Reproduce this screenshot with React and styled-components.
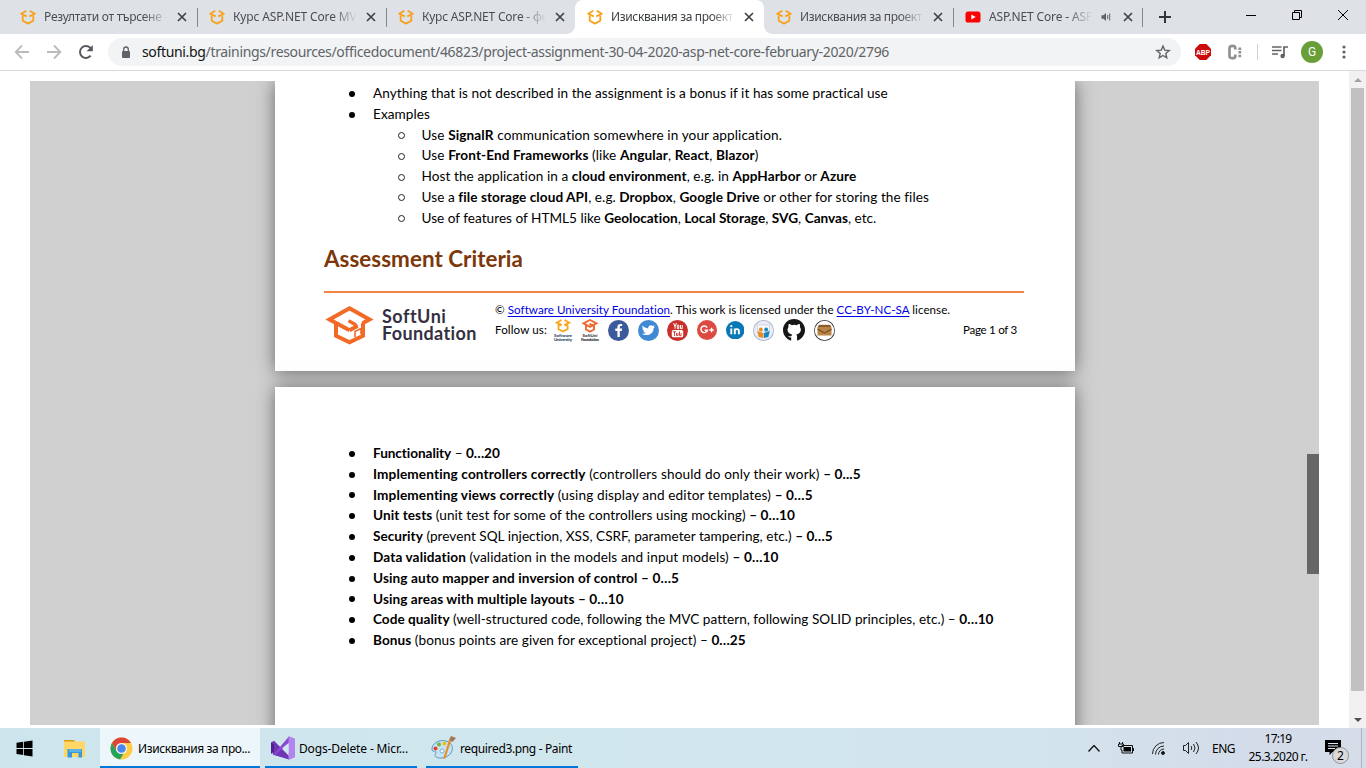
import React, { useLayoutEffect, useRef, useState } from "react";
import styled, { createGlobalStyle } from "styled-components";

const Global = createGlobalStyle`
  * { box-sizing: border-box; }
  html, body { margin: 0; padding: 0; overflow: hidden; }
  body { width: 1366px; height: 768px; font-family: "Noto Sans", "Open Sans", sans-serif; background: #fff; }
  svg { display: block; flex: none; }
`;

const FitText = styled.span`
  display: inline-block;
  white-space: pre;
`;

/* Spreads a run of text over a known width by adjusting its tracking. */
function Fit({ w, children }) {
  const ref = useRef(null);
  const [gap, setGap] = useState(0);
  useLayoutEffect(() => {
    const el = ref.current;
    const run = () => {
      el.style.letterSpacing = "0px";
      const value = (w - el.getBoundingClientRect().width) / el.textContent.length;
      el.style.letterSpacing = value + "px";
      setGap(value);
    };
    run();
    document.fonts.ready.then(run);
  }, [w]);
  return <FitText ref={ref} style={{ letterSpacing: gap }}>{children}</FitText>;
}

const Screen = styled.div`
  width: 1366px; height: 768px; display: flex; flex-direction: column; overflow: hidden;
`;

/* ---------- tab strip ---------- */
const TabStrip = styled.div`
  height: 34px; flex: none; background: #dee1e6; display: flex; padding-left: 8px;
`;
const TabBox = styled.div`
  position: relative; width: 189px; flex: none; height: 34px; display: flex; align-items: center;
  padding-left: 12px; font-size: 12px; color: ${(p) => (p.$active ? "#3c4043" : "#4a4d51")};
  background: ${(p) => (p.$active ? "#fff" : "transparent")};
  border-radius: 8px 8px 0 0;
  &::after {
    content: ""; position: absolute; right: -1px; top: 8px; width: 1px; height: 19px;
    background: ${(p) => (p.$line ? "#85898e" : "transparent")};
  }
`;
const Foot = styled.i`
  position: absolute; bottom: 0; ${(p) => p.$side}: -8px; width: 8px; height: 8px;
  background: radial-gradient(circle at ${(p) => (p.$side === "left" ? "0 0" : "100% 0")}, transparent 7.5px, #fff 8px);
`;
const TabTitle = styled.div`
  width: ${(p) => p.$w || 126}px; flex: none; margin-left: 8px; overflow: hidden; white-space: nowrap; line-height: 18px;
  mask-image: linear-gradient(90deg, #000 calc(100% - 26px), transparent calc(100% - 2px));
`;
const TabIcon = styled.div`
  width: 29px; flex: none; padding-left: 7px;
`;
const NewTab = styled.div`
  width: 45px; display: flex; align-items: center; justify-content: center;
`;
const WindowButtons = styled.div`
  margin-left: auto; display: flex; height: 29px; align-items: center;
`;
const WindowButton = styled.div`
  width: 46px; display: flex; justify-content: center;
`;

/* ---------- toolbar ---------- */
const Toolbar = styled.div`
  height: 37px; flex: none; background: #fff; border-bottom: 1px solid #d7d9dc; display: flex; align-items: center;
  padding-left: 14px;
`;
const NavIcon = styled.div`
  width: 32px; flex: none; display: flex; align-items: center; padding-left: ${(p) => p.$pad || 0}px;
`;
const Omnibox = styled.div`
  margin-left: -2px; width: 1073px; flex: none; height: 28px; border-radius: 14px; background: #f1f3f4; display: flex; align-items: center;
  padding: 0 10px 0 13px; font-size: 14px; color: #5f6368;
`;
const Url = styled.div`
  margin-left: 11px; flex: 1; line-height: 20px;
  b { font-weight: 400; color: #111315; }
`;
const Actions = styled.div`
  flex: 1; display: flex; align-items: center; padding-left: 13px;
`;
const Separator = styled.div`
  width: 1px; flex: none; height: 16px; background: #cfd1d4; margin: 0 14px 0 13px;
`;
const Avatar = styled.div`
  width: 22px; flex: none; height: 22px; border-radius: 50%; background: #689f38; color: #fff; font: 12px/22px Roboto, sans-serif;
  text-align: center; margin: 0 19px 0 13px;
`;

/* ---------- viewport ---------- */
const Viewport = styled.div`
  height: 657px; flex: none; display: flex; background: #fff; padding-left: 30px;
`;
const Viewer = styled.div`
  width: 1289px; height: 644px; margin: 10px 30px 0 0; background: #d0d0d0; display: flex; overflow: hidden;
`;
const Pages = styled.div`
  width: 1277px; padding-left: 245px; display: flex; flex-direction: column; gap: 16px;
`;
const InnerTrack = styled.div`
  width: 12px; padding-top: 373px;
`;
const InnerThumb = styled.div`
  height: 120px; background: #666;
`;
const ScrollBar = styled.div`
  width: 17px; height: 657px; background: #f1f1f1; display: flex; flex-direction: column; align-items: center;
`;
const ScrollEnd = styled.div`
  height: 17px; display: flex; align-items: center;
`;
const ScrollThumb = styled.div`
  width: 13px; height: 603px; background: #c1c1c1; margin-bottom: 20px;
`;

/* ---------- document ---------- */
const Sheet = styled.article`
  width: 800px; height: ${(p) => p.$h}px; flex: none; background: #fff; color: #000;
  box-shadow: 0 1px 17px 0 rgba(0, 0, 0, .5);
  font-family: Lato, sans-serif; font-size: 13.6px; padding: ${(p) => p.$pad};
`;
const Item = styled.div`
  height: 20.8px; line-height: 20.8px; display: flex; align-items: center; white-space: pre;
  padding-left: ${(p) => (p.$sub ? 73.5 : 25)}px;
  b { font-weight: 700; }
`;
const Mark = styled.i`
  width: ${(p) => (p.$sub ? 7 : 6)}px; height: ${(p) => (p.$sub ? 7 : 6)}px; border-radius: 50%; flex: none;
  margin-right: ${(p) => (p.$sub ? 17 : 18)}px;
  margin-top: 1px;
  background: ${(p) => (p.$sub ? "transparent" : "#000")};
  border: ${(p) => (p.$sub ? "1px solid #222" : "none")};
`;
const Heading = styled.h1`
  margin: 15px 0 0; height: 30px; font-size: 22.4px; line-height: 30px; font-weight: 700; color: #7c380a;
`;
const Footer = styled.footer`
  margin-top: 17px; width: 700px; border-top: 2px solid #f58345; display: flex;
`;
const Brand = styled.div`
  width: 170px; display: flex; padding: 13px 0 0 1px;
`;
const BrandName = styled.div`
  margin: 2px 0 0 8px; font: 700 18px/17.5px Lato, sans-serif; color: #343042; display: flex; flex-direction: column;
`;
const Legal = styled.div`
  flex: 1; padding: 7px 0 0 1px; font-size: 11.6px; line-height: 20px; white-space: pre;
  a { color: #0000e8; text-decoration: underline; text-underline-offset: 2px; }
`;
const Social = styled.div`
  display: flex; align-items: center; height: 20px;
`;
const Icons = styled.div`
  display: flex; align-items: center; margin-left: 5px; padding-top: 1px;
`;
const IconCell = styled.div`
  width: ${(p) => p.$w}px; height: 24px; display: flex; justify-content: center; align-items: center;
`;
const PageNo = styled.div`
  margin-left: 124px;
`;

/* ---------- taskbar ---------- */
const TaskBar = styled.div`
  height: 40px; flex: none; display: flex; font-size: 12px; color: #000;
  background: linear-gradient(90deg, #cde5ed 0, #d1e7ee 45%, #d2e4ed 75%, #d4dcea 92%, #d6dde9 100%);
`;
const TaskButton = styled.div`
  width: ${(p) => p.$w}px; height: 40px; display: flex; align-items: center; padding-left: ${(p) => p.$pad}px;
  margin-right: ${(p) => p.$gap || 0}px; gap: ${(p) => p.$space || 4}px;
  background: ${(p) => (p.$active ? "#edf6fa" : "transparent")};
  box-shadow: ${(p) => (p.$open ? "inset 0 -2px #0078d7" : "none")};
`;
const Tray = styled.div`
  margin-left: auto; display: flex; align-items: center;
`;
const TrayIcon = styled.div`
  width: ${(p) => p.$w}px; display: flex; justify-content: center;
`;
const Clock = styled.div`
  width: 74px; margin-right: 1px; text-align: center; line-height: 18px; padding-bottom: 1px;
`;
const Notice = styled.div`
  width: 46px; height: 40px; position: relative; padding: 12px 0 0 9px; margin-right: 4px;
  border-right: 1px solid #a9b4bf;
`;
const Count = styled.div`
  position: absolute; left: 16px; top: 19px; width: 17px; height: 17px; border-radius: 50%; background: #dadada;
  border: 1px solid #8e9398; font-size: 12px; line-height: 15px; text-align: center;
`;

/* ---------- drawings ---------- */
const Hat = ({ s = 16, c = "#f9a11b" }) => (
  <svg width={s} height={s} viewBox="0 0 16 16" fill="none" stroke={c} strokeWidth="1.8" strokeLinejoin="round">
    <path d="M6.300 1.800 1.200 4.700 6.700 7.400M9.700 1.800l5.100 2.900-5.500 2.700" />
    <path d="M2.700 6.500v5.300L8 14.600l5.300-2.800V6.500" />
  </svg>
);
const Close = () => (
  <svg width="10" height="10" viewBox="0 0 10 10" stroke="#3f4347" strokeWidth="1.7"><path d="m1 1 8 8M9 1 1 9" /></svg>
);
const YouTube = () => (
  <svg width="16" height="16" viewBox="0 0 16 16"><rect x=".5" y="2.5" width="15" height="11" rx="2.6" fill="#f00" /><path d="m6.3 5.5 4.4 2.5-4.4 2.5z" fill="#fff" /></svg>
);
const SmallSpeaker = () => (
  <svg width="10" height="10" viewBox="0 0 10 10"><path d="M.5 3.2h2L5 1v8L2.5 6.800h-2z" fill="#5f6368" /><path d="M6.700 3v4M8.700 1.500v7" stroke="#5f6368" fill="none" /></svg>
);
const Arrow = ({ flip }) => (
  <svg width="16" height="16" viewBox="0 0 16 16" fill="none" stroke="#b9bbbd" strokeWidth="1.8">
    {flip ? <path d="M1 8h13M8 1.500 14.300 8 8 14.500" /> : <path d="M15 8H2M8 1.500 1.700 8 8 14.500" />}
  </svg>
);
const Reload = () => (
  <svg width="16" height="16" viewBox="0 0 16 16"><path d="M12.700 11.700A6 6 0 1 1 12.600 4.100" fill="none" stroke="#55595e" strokeWidth="2" /><path d="M14.800 1v6.300H8.600z" fill="#55595e" /></svg>
);
const Lock = () => (
  <svg width="10" height="13" viewBox="0 0 10 13"><rect x="1" y="5" width="8" height="7" rx="1" fill="#5f6368" /><path d="M2.700 5V3.300a2.300 2.300 0 0 1 4.600 0V5" fill="none" stroke="#5f6368" strokeWidth="1.300" /></svg>
);
const Star = () => (
  <svg width="16" height="16" viewBox="0 0 16 16"><path d="m8 2 1.700 4.100 4.500.400-3.400 2.900 1 4.400L8 11.500l-3.800 2.300 1-4.400-3.400-2.900 4.500-.400z" fill="none" stroke="#5f6368" strokeWidth="1.400" /></svg>
);
const Abp = () => (
  <svg width="18" height="18" viewBox="0 0 18 18"><path d="M5.700 1h6.600L17 5.700v6.600L12.300 17H5.700L1 12.300V5.700z" fill="#cc0c0c" /><text x="9" y="11.800" textAnchor="middle" fontFamily="Liberation Sans" fontWeight="700" fontSize="7.600" textLength="14" lengthAdjust="spacingAndGlyphs" fill="#fff">ABP</text></svg>
);
const Colon = () => (
  <svg width="16" height="16" viewBox="0 0 16 16" fill="none" stroke="#8f9193"><path d="M8.300 5.500V4Q8.300 1.800 5.500 1.800T2.500 4v8q0 2.200 3 2.200t2.800-2.200v-1.500" strokeWidth="2.700" /><path d="M12.800 3.500v2.500M12.800 7v2.500M12.800 10.700v2.500" strokeWidth="2.800" /></svg>
);
const Music = () => (
  <svg width="16" height="14" viewBox="0 0 16 14"><path d="M0 2h9.500M0 5.500h9.500M0 9h6M12 11V2h4" fill="none" stroke="#5f6368" strokeWidth="1.700" /><circle cx="10.600" cy="11" r="2.200" fill="#5f6368" /></svg>
);
const Dots = () => (
  <svg width="4" height="14" viewBox="0 0 4 14" fill="#5f6368"><circle cx="2" cy="2" r="1.600" /><circle cx="2" cy="7" r="1.600" /><circle cx="2" cy="12" r="1.600" /></svg>
);
const Logo = () => (
  <svg width="49" height="39" viewBox="0 0 49 39" fill="none" stroke="#f26a26" strokeWidth="4">
    <path d="M11 17v12.800l13.500 6.400L38 29.800V17" />
    <path d="M24.500 24.300 4.500 13.500l20-11.200 20 11.200-7 3.800M24.500 24.300l8-4.300" />
    <path d="m23.500 14.800 5 2.700q3 1.600 3 4" strokeWidth="3.400" />
    <path d="M30 31v-5.500l6-3V28" strokeWidth="1.600" />
  </svg>
);
const MiniMark = ({ c, text, lines, solid }) => (
  <svg width="20" height="24" viewBox="0 0 20 24">
    <g transform="translate(2.500 1)" fill="none" stroke={c} strokeWidth="1.900">
      {solid
        ? <path d="M7.500 1 1 4.300l6.500 3.500L14 4.300zM3.500 6.500v4l4 2.200 4-2.200v-4M7 4.500l3 2" />
        : <path d="M6 1 1.300 3.700 6.300 6.200M9 1l4.700 2.700-5 2.500M3 5.500v4.700l4.500 2.300 4.500-2.300V5.500" />}
    </g>
    <g fontFamily="Lato" fontWeight="900" fontSize="4.400" fill={text} textAnchor="middle"><text x="10" y="18.500">{lines[0]}</text><text x="10" y="22.500" textLength="18">{lines[1]}</text></g>
  </svg>
);
const Disc = ({ c, s = 21, children }) => (
  <svg width={s} height={s} viewBox="0 0 21 21"><circle cx="10.500" cy="10.500" r="10.500" fill={c} />{children}</svg>
);
const Facebook = () => <Disc c="#3b5a9b"><path d="M11.800 17v-6h2l.300-2.400h-2.300V7.200c0-.800.300-1.200 1.200-1.200h1.200V4c-3.200-.500-4.800.500-4.800 3v1.600H7.300V11h2.100v6z" fill="#fff" /></Disc>;
const Twitter = () => <Disc c="#4189d3"><path d="M4.500 5.500c1.500 1.800 3.300 2.700 5.700 2.900-.500-2.700 2.700-4.300 4.600-2.400l1.800-.700-1 1.700 1.400-.300-1.400 1.500c0 5.500-6 8.800-11.400 5.700 1.500 0 2.700-.400 3.600-1.200-1.300 0-2.100-.8-2.400-1.800h1c-1.400-.5-2-1.500-2-2.700l1 .3c-1.200-1-1.400-2-.9-3z" fill="#fff" /></Disc>;
const Tube = () => <Disc c="#c9302a"><path d="m6.500 3 1.500 3.500v2.300M9.500 3 8 6.500M10.300 5.200v3.400h1.500V5.200zM13.500 5v3.600h1.700V5" fill="none" stroke="#fff" /><rect x="4.800" y="10" width="11.400" height="7.200" rx="1.500" fill="#fff" /><path d="M6 11.800h3M7.500 11.800V16M9.500 13v2.500h1.500V13M12.500 11.500v4.200h1.600v-2.500" fill="none" stroke="#c9302a" strokeWidth=".9" /></Disc>;
const Google = () => <Disc c="#dc4a41" s={20}><path d="M10.700 8A3.500 3.500 0 1 0 11 10.800H8M13 10.500h4.600M15.300 8.200v4.600" fill="none" stroke="#fff" strokeWidth="1.500" /></Disc>;
const LinkedIn = () => <Disc c="#0879b5" s={18.500}><path d="M6 8.500V15M10 15V8.500M10 11c.4-2.400 4.600-2.500 4.600.3V15" fill="none" stroke="#fff" strokeWidth="2.200" /><circle cx="6" cy="5.800" r="1.300" fill="#fff" /></Disc>;
const Slides = () => <Disc c="#a3adc4"><circle cx="10.500" cy="10.500" r="9.700" fill="#e9ecf7" /><path d="M4.500 5h12v6h-12z" fill="#fafafa" stroke="#c6cbdc" strokeWidth=".7" /><circle cx="7.800" cy="9.500" r="1.900" fill="#e98a22" /><circle cx="13.200" cy="9.500" r="1.900" fill="#1686bd" /><path d="m4.200 11 6 2v5L5.700 17z" fill="#e98a22" /><path d="m16.800 11-6 2v5l4.500-1z" fill="#1686bd" /></Disc>;
const GitHub = () => <Disc c="#171515" s={22}><path d="M7.800 21v-3.500c-2 .4-2.600-.6-3.200-1.700 1.800 1.200 2.400.8 3.500.4.100-.8.400-1.200.7-1.500-4.800-.6-5.300-5-3.500-7-.3-1-.2-2 .2-3 1.200 0 2.200.7 2.900 1.200a9 9 0 0 1 4.600 0c.8-.6 1.700-1.200 2.900-1.200.4 1 .5 2 .2 3 1.800 2 1.300 6.400-3.500 7 .4.400.8 1 .8 2V21z" fill="#fff" /></Disc>;
const Mail = () => <Disc c="#343434"><circle cx="10.500" cy="10.500" r="9.700" fill="#fff" /><path d="M3.500 7.500 5 4.800h11l1.500 2.700V15.500h-14z" fill="#b98448" /><path d="m3.500 8.500 7 4 7-4v1.500l-7 3.500-7-3.500z" fill="#76481e" /><path d="M5 5h11l1 2H4z" fill="#8a5a2b" /></Disc>;

const Windows = () => (
  <svg width="17" height="17" viewBox="0 0 17 17"><path d="m.5 2.800 6.700-1V8H.500zM8 1.700 16.500.500V8H8zM.500 8.900h6.700V15l-6.700-1zM8 8.900h8.500v7.600L8 15.300z" /></svg>
);
const Folder = () => (
  <svg width="22" height="19" viewBox="0 0 22 19"><path d="M0 1h10l1.500 3H0z" fill="#d99a16" /><path d="M0 4V2.500h21V18H0z" fill="#ffd766" /><path d="M3.500 10h14.500v8.500h-3.500V14H8v4.500H3.500z" fill="#3b98d8" /><path d="M5 10h12v3H5z" fill="#5db2e8" /></svg>
);
const Chrome = () => (
  <svg width="23" height="23" viewBox="0 0 24 24"><circle cx="12" cy="12" r="11.500" fill="#fc4" /><path d="M2 6.300A11.500 11.500 0 0 1 22 6.300H12a5.700 5.700 0 0 0-5 8.500z" fill="#dc4639" /><path d="M2 6.300a11.500 11.500 0 0 0 8.500 17.100l5-8.600a5.700 5.700 0 0 1-8.500 0z" fill="#25a35a" /><circle cx="12" cy="12" r="5.800" fill="#f5f5f5" /><circle cx="12" cy="12" r="4.500" fill="#4a86ec" /></svg>
);
const VisualStudio = () => (
  <svg width="24" height="24" viewBox="0 0 24 24"><path d="m0 6.500 3-1.700L18 20v3.500L2 18.700z" fill="#6f35b5" /><path d="m0 6.500 3 2v7L0 18z" fill="#52218f" /><path d="m2 19 16-18.500V7L4 19z" fill="#8b49d2" /><path d="m17.500 0 6.500 2.800v18.400L17.500 24z" fill="#b184ee" /><path d="m17.500 7-6 5 6 5z" fill="#d1e7ee" /></svg>
);
const Paint = () => (
  <svg width="25" height="24" viewBox="0 0 25 24"><path d="M1 14C0 8 8 3 15 5c6 1.500 8 7 5 12-3 4.800-11 6.300-15 4-2-1.300-.5-3 0-4.500C5.500 15 2 16.500 1 14z" fill="#c7e3f2" stroke="#579bc4" /><circle cx="4.500" cy="12.500" r="2" fill="#e53e2d" /><circle cx="8" cy="8.500" r="2" fill="#74b43b" /><circle cx="13.500" cy="7.500" r="2" fill="#f2b91e" /><circle cx="11" cy="15" r="2" fill="#fff" stroke="#6bb0db" /><path d="m20 5-5.500 17-2 1.500.3-3L18 4z" fill="#e98d24" /><path d="m18 4 2-4 5 2-3.500 4z" fill="#a47850" /></svg>
);

const TABS = [
  { title: "Резултати от търсене -", w: 124 },
  { title: "Курс ASP.NET Core MVC", w: 131 },
  { title: "Курс ASP.NET Core - фе", w: 126 },
  { title: "Изисквания за проект", w: 122, active: true },
  { title: "Изисквания за проект", w: 122 },
];

const EXAMPLES = [
  [361, <>Use <b>SignalR</b> communication somewhere in your application.</>],
  [337, <>Use <b>Front-End Frameworks</b> (like <b>Angular</b>, <b>React</b>, <b>Blazor</b>)</>],
  [435, <>Host the application in a <b>cloud environment</b>, e.g. in <b>AppHarbor</b> or <b>Azure</b></>],
  [507, <>Use a <b>file storage cloud API</b>, e.g. <b>Dropbox</b>, <b>Google Drive</b> or other for storing the files</>],
  [455, <>Use of features of HTML5 like <b>Geolocation</b>, <b>Local Storage</b>, <b>SVG</b>, <b>Canvas</b>, etc.</>],
];

const CRITERIA = [
  [127, <><b>Functionality</b> – <b>0…20</b></>],
  [488, <><b>Implementing controllers correctly</b> (controllers should do only their work) <b>– 0...5</b></>],
  [440, <><b>Implementing views correctly</b> (using display and editor templates) <b>– 0…5</b></>],
  [422, <><b>Unit tests</b> (unit test for some of the controllers using mocking) <b>– 0…10</b></>],
  [460, <><b>Security</b> (prevent SQL injection, XSS, CSRF, parameter tampering, etc.) <b>– 0…5</b></>],
  [406, <><b>Data validation</b> (validation in the models and input models) <b>– 0…10</b></>],
  [306, <b>Using auto mapper and inversion of control – 0…5</b>],
  [251, <b>Using areas with multiple layouts – 0…10</b>],
  [620, <><b>Code quality</b> (well-structured code, following the MVC pattern, following SOLID principles, etc.) – <b>0…10</b></>],
  [373, <><b>Bonus</b> (bonus points are given for exceptional project) – <b>0…25</b></>],
];

const Bullet = ({ w, sub, children }) => (
  <Item $sub={sub}><Mark $sub={sub} /><Fit w={w}>{children}</Fit></Item>
);

export default function App() {
  return (
    <Screen>
      <Global />
      <TabStrip>
        {TABS.map((t, i) => (
          <TabBox key={i} $active={t.active} $line={i !== 2 && !t.active}>
            {t.active && <><Foot $side="left" /><Foot $side="right" /></>}
            <Hat />
            <TabTitle><Fit w={t.w}>{t.title}</Fit></TabTitle>
            <TabIcon><Close /></TabIcon>
          </TabBox>
        ))}
        <TabBox $line>
          <YouTube />
          <TabTitle $w={105}><Fit w={104}>ASP.NET Core - ASP</Fit></TabTitle>
          <TabIcon><SmallSpeaker /></TabIcon>
          <Close />
        </TabBox>
        <NewTab><svg width="12" height="12" viewBox="0 0 12 12" stroke="#34373a" strokeWidth="2"><path d="M0 6h12M6 0v12" /></svg></NewTab>
        <WindowButtons>
          <WindowButton><svg width="10" height="10" stroke="#000"><path d="M0 5.500h10" /></svg></WindowButton>
          <WindowButton><svg width="10" height="10" fill="none" stroke="#000"><path d="M.500 2.500h7v7h-7zM2.500 2V.500h7v7H8" /></svg></WindowButton>
          <WindowButton><svg width="10" height="10" stroke="#000"><path d="m0 0 10 10M10 0 0 10" /></svg></WindowButton>
        </WindowButtons>
      </TabStrip>

      <Toolbar>
        <NavIcon><Arrow /></NavIcon>
        <NavIcon><Arrow flip /></NavIcon>
        <NavIcon><Reload /></NavIcon>
        <Omnibox>
          <Lock />
          <Url><Fit w={747}><b>softuni.bg</b>/trainings/resources/officedocument/46823/project-assignment-30-04-2020-asp-net-core-february-2020/2796</Fit></Url>
          <Star />
        </Omnibox>
        <Actions>
          <Abp />
          <NavIcon $pad={15}><Colon /></NavIcon>
          <Separator />
          <Music />
          <Avatar>G</Avatar>
          <Dots />
        </Actions>
      </Toolbar>

      <Viewport>
        <Viewer>
          <Pages>
            <Sheet $h={290} $pad="2px 49px 0">
              <Bullet w={515}>Anything that is not described in the assignment is a bonus if it has some practical use</Bullet>
              <Bullet w={57}>Examples</Bullet>
              {EXAMPLES.map(([w, body], i) => <Bullet key={i} w={w} sub>{body}</Bullet>)}
              <Heading><Fit w={199}>Assessment Criteria</Fit></Heading>
              <Footer>
                <Brand>
                  <Logo />
                  <BrandName><div><Fit w={64}>SoftUni</Fit></div><div><Fit w={95}>Foundation</Fit></div></BrandName>
                </Brand>
                <Legal>
                  <Fit w={455}>© <a>Software University Foundation</a>. This work is licensed under the <a>CC-BY-NC-SA</a> license.</Fit>
                  <Social>
                    <Fit w={52}>Follow us:</Fit>
                    <Icons>
                      <IconCell $w={22}><MiniMark c="#f9a825" text="#234465" lines={["Software", "University"]} /></IconCell>
                      <IconCell $w={31}><MiniMark solid c="#ee6a32" text="#333" lines={["SoftUni", "Foundation"]} /></IconCell>
                      <IconCell $w={27}><Facebook /></IconCell>
                      <IconCell $w={32}><Twitter /></IconCell>
                      <IconCell $w={27}><Tube /></IconCell>
                      <IconCell $w={31}><Google /></IconCell>
                      <IconCell $w={26}><LinkedIn /></IconCell>
                      <IconCell $w={31}><Slides /></IconCell>
                      <IconCell $w={30}><GitHub /></IconCell>
                      <IconCell $w={30}><Mail /></IconCell>
                    </Icons>
                    <PageNo><Fit w={54}>Page 1 of 3</Fit></PageNo>
                  </Social>
                </Legal>
              </Footer>
            </Sheet>
            <Sheet $h={400} $pad="56px 49px 0">
              {CRITERIA.map(([w, body], i) => <Bullet key={i} w={w}>{body}</Bullet>)}
            </Sheet>
          </Pages>
          <InnerTrack><InnerThumb /></InnerTrack>
        </Viewer>
        <ScrollBar>
          <ScrollEnd><svg width="8" height="4"><path d="M0 4 4 0l4 4z" fill="#a3a3a3" /></svg></ScrollEnd>
          <ScrollThumb />
          <ScrollEnd><svg width="8" height="4"><path d="m0 0 4 4 4-4z" fill="#505050" /></svg></ScrollEnd>
        </ScrollBar>
      </Viewport>

      <TaskBar>
        <TaskButton $w={48} $pad={16}><Windows /></TaskButton>
        <TaskButton $w={52} $pad={16}><Folder /></TaskButton>
        <TaskButton $w={160} $pad={10} $gap={5} $space={5} $active $open><Chrome /><Fit w={112}>Изисквания за про...</Fit></TaskButton>
        <TaskButton $w={152} $pad={6} $gap={9} $open><VisualStudio /><Fit w={109}>Dogs-Delete - Micr...</Fit></TaskButton>
        <TaskButton $w={152} $pad={5} $open><Paint /><Fit w={112}>required3.png - Paint</Fit></TaskButton>
        <Tray>
          <TrayIcon $w={32}><svg width="12" height="7" fill="none" stroke="#111" strokeWidth="1.300"><path d="m.5 6.500 5.500-6 5.500 6" /></svg></TrayIcon>
          <TrayIcon $w={32}><svg width="16" height="12" viewBox="0 0 16 12"><path d="M4 4.500V3.500h10.500V11H4V8M15.500 6v3M1.500 0v2M4.500 0v2M.500 2h5v2.500h-5zM3 5v3h1" fill="none" stroke="#111" /><path d="M5.500 5h7.500v4.500H5.500z" /></svg></TrayIcon>
          <TrayIcon $w={34}><svg width="14" height="13" viewBox="0 0 14 13" fill="none" stroke="#222"><path d="M.500 12A11.500 11.500 0 0 1 12 .500M3.500 12.500A8.500 8.500 0 0 1 12 4M6.500 12.500A5.500 5.500 0 0 1 12 7" /><circle cx="11" cy="11" r="1.500" fill="#111" /></svg></TrayIcon>
          <TrayIcon $w={30}><svg width="17" height="14" viewBox="0 0 17 14" fill="none" stroke="#222"><path d="M.500 4.500h2l3-3v11l-3-3h-2zM8 5q1.500 2 0 4M10.500 3q3 4 0 8M13 1q5 6 0 12" /></svg></TrayIcon>
          <TrayIcon $w={35}><Fit w={23}>ENG</Fit></TrayIcon>
          <Clock><Fit w={27}>17:19</Fit><br /><Fit w={59}>25.3.2020 г.</Fit></Clock>
          <Notice>
            <svg width="16" height="15" viewBox="0 0 16 15"><path d="M0 0h16v12H7.500L4.500 15v-3H0z" /><path d="M3 3.500h10M3 6h10M3 8.500h7" stroke="#dce5ee" /></svg>
            <Count>2</Count>
          </Notice>
        </Tray>
      </TaskBar>
    </Screen>
  );
}
